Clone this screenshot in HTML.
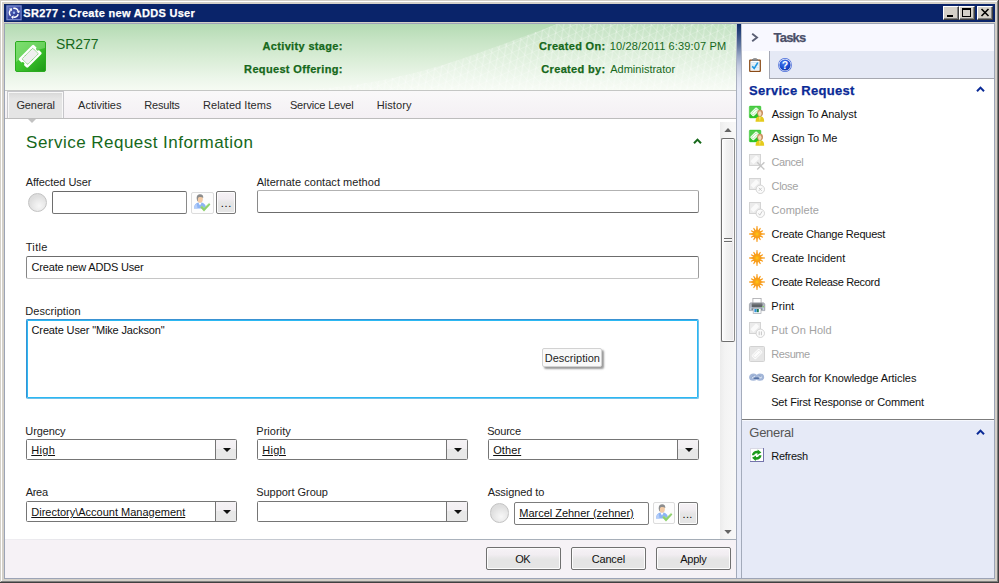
<!DOCTYPE html>
<html lang="en"><head><meta charset="utf-8"><title>SR277 : Create new ADDS User</title>
<style>
html,body{margin:0;padding:0}
body{width:999px;height:583px;overflow:hidden;position:relative;background:#d4d0c8;font-family:"Liberation Sans",sans-serif;font-size:11px;color:#000}
.a{position:absolute;box-sizing:border-box}
.t{position:absolute;white-space:nowrap;line-height:0;height:0}
svg{position:absolute;overflow:visible}
.cap{position:absolute;box-sizing:border-box;width:16px;height:14px;top:6px;background:#d4d0c8;border:1px solid;border-color:#fff #404040 #404040 #fff;box-shadow:inset -1px -1px 0 #808080}
.tb{position:absolute;box-sizing:border-box;background:#fff;border:1px solid #8e8e8e;border-top-color:#6e6e6e;border-left-color:#7a7a7a;border-radius:2px}
.cb{position:absolute;box-sizing:border-box;background:#fff;border:1px solid #757575;border-radius:1.5px;height:21px;width:211px}
.cb i{position:absolute;right:0;top:0;width:20px;height:19px;border-left:1px solid #757575;background:linear-gradient(#f6f3f6 0,#f2eff2 45%,#e8e8e8 50%,#e8e8e8 100%)}
.cb i:after{content:"";position:absolute;left:7px;top:8px;border:4px solid transparent;border-top:4px solid #111;border-bottom:0;width:0;height:0;margin-left:-0.5px}
.btn{position:absolute;box-sizing:border-box;border:1px solid #707070;border-radius:2px;box-shadow:inset 0 0 0 1px #fcfcfc;background:linear-gradient(#f6f2f6 0,#f1edf1 32%,#eae8ea 44%,#e5e5e5 54%,#e5e5e5 100%)}
.circ{position:absolute;box-sizing:border-box;width:19.7px;height:19.7px;border-radius:50%;border:1px solid #c3c3c3;background:radial-gradient(circle at 60% 70%,#f7f7f7 0,#ececec 30%,#dfdfdf 62%,#d9d9d9 100%)}
.ib{position:absolute;box-sizing:border-box;width:23px;height:22px;border:1px solid #dcdcdc;border-radius:2px;background:#fdfdfd}

</style></head>
<body>
<!-- window frame -->
<div class="a" style="left:1px;top:1px;width:996px;height:1px;background:#fff"></div>
<div class="a" style="left:1px;top:1px;width:1px;height:580px;background:#fff"></div>
<div class="a" style="left:998px;top:0;width:1px;height:583px;background:#404040"></div>
<div class="a" style="left:0;top:582px;width:999px;height:1px;background:#404040"></div>
<div class="a" style="left:997px;top:1px;width:1px;height:581px;background:#808080"></div>
<div class="a" style="left:1px;top:581px;width:997px;height:1px;background:#808080"></div>
<!-- title bar -->
<div class="a" style="left:4px;top:4px;width:991px;height:18px;background:#0a246a"></div>
<svg style="left:6px;top:5px" width="16" height="16" viewBox="0 0 16 16"><defs><linearGradient id="ti" x1="0" y1="0" x2="1" y2="1"><stop offset="0" stop-color="#6272c0"/><stop offset="0.5" stop-color="#3a48a0"/><stop offset="1" stop-color="#27328a"/></linearGradient></defs><rect x="0.3" y="0.3" width="15.4" height="15" fill="#7b8cd2"/><rect x="1.5" y="1.5" width="13" height="12.6" fill="url(#ti)"/><path d="M7.22 3.37A4.5 4.5 0 0 1 12.17 6.11" stroke="#fff" stroke-width="1.4" fill="none"/><path d="M13.07 8.34L13.93 5.40L10.41 6.83Z" fill="#fff"/><path d="M12.23 9.34A4.5 4.5 0 0 1 7.37 12.26" stroke="#fff" stroke-width="1.4" fill="none"/><path d="M5.00 11.92L7.11 14.14L7.64 10.37Z" fill="#fff"/><path d="M4.55 10.69A4.5 4.5 0 0 1 4.45 5.03" stroke="#fff" stroke-width="1.4" fill="none"/><path d="M5.93 3.14L2.96 3.86L5.95 6.20Z" fill="#fff"/><circle cx="8.0" cy="7.8" r="1.2" fill="#9db8f0"/></svg>
<div class="cap" style="left:943px"><div class="a" style="left:3px;top:8px;width:6px;height:2px;background:#000"></div></div>
<div class="cap" style="left:959px"><div class="a" style="left:2px;top:1px;width:9px;height:9px;border:1px solid #000;border-top-width:2px"></div></div>
<div class="cap" style="left:977px"><svg style="left:3px;top:2px" width="8" height="7" viewBox="0 0 8 7"><path d="M0.5 0 L7.5 7 M7.5 0 L0.5 7" stroke="#000" stroke-width="1.6" fill="none"/></svg></div>
<!-- content outline -->
<div class="a" style="left:4px;top:23px;width:991px;height:556px;border:1px solid #9ca4b6;background:#fff"></div>

<!-- LEFT PANE -->
<div class="a" id="hdr" style="left:5px;top:24px;width:731px;height:66px;background:linear-gradient(#b4dbb3 0,#c7e4c5 25%,#dbeed8 55%,#ecf6ea 82%,#f6fbf3 100%)"></div>
<svg style="left:5px;top:24px" width="731" height="66" viewBox="0 0 731 66">
<defs>
<pattern id="mesh" width="8" height="8" patternUnits="userSpaceOnUse" patternTransform="rotate(-24) skewX(18)">
<path d="M0 0H8M0 0V8M0 8L8 0" stroke="#fff" stroke-width="0.8" fill="none" opacity="0.5"/>
</pattern>
<linearGradient id="mf" gradientUnits="userSpaceOnUse" x1="290" y1="0" x2="731" y2="0"><stop offset="0" stop-color="#fff" stop-opacity="0.04"/><stop offset="0.35" stop-color="#fff" stop-opacity="0.2"/><stop offset="1" stop-color="#fff" stop-opacity="0.2"/></linearGradient>
<clipPath id="hc"><rect x="0" y="0" width="731" height="66"/></clipPath>
</defs>
<g clip-path="url(#hc)">
<path d="M290 66 C360 64 420 48 465 32 S532 8 552 0 L731 0 L731 66 Z" fill="url(#mf)"/>
<path d="M290 66 C360 64 420 48 465 32 S532 8 552 0 L731 0 L731 66 Z" fill="url(#mesh)"/>
</g>
</svg>
<div class="a" style="left:5px;top:90px;width:731px;height:1px;background:#c4c6c4"></div>
<div class="a" style="left:5px;top:91px;width:731px;height:27px;background:linear-gradient(#f9f8f9,#f4f0f4)"></div>
<div class="a" style="left:5px;top:118px;width:731px;height:1px;background:#bdbdbd"></div>
<!-- selected tab -->
<div class="a" style="left:7px;top:91px;width:57px;height:27px;background:linear-gradient(#d5d5d5 0,#dedede 3px,#e5e5e5 7px,#e5e5e5 100%);border:1px solid #c6c6ca;border-bottom:none;box-shadow:inset 1px 1px 0 #f8f8f8,inset -1px 0 0 #f8f8f8"></div>
<svg style="left:28px;top:119px" width="8" height="4" viewBox="0 0 8 4"><path d="M0 0H8L4 4Z" fill="#c2c2c2"/></svg>
<!-- green logo -->
<svg style="left:15px;top:41px" width="31" height="31" viewBox="0 0 31 31">
<defs><linearGradient id="lg" x1="0" y1="0" x2="1" y2="1"><stop offset="0" stop-color="#56d644"/><stop offset="0.5" stop-color="#3cc42c"/><stop offset="1" stop-color="#1c9816"/></linearGradient></defs>
<rect x="0.5" y="0.5" width="30" height="30" rx="1.5" fill="url(#lg)" stroke="#2bab20"/>
<path d="M1 1H30V7C20 9 9 14 1 21Z" fill="#fff" opacity="0.24"/>
<g transform="rotate(-45 15.2 15.3)">
<path d="M6 8.9H24.4A1.4 1.4 0 0 1 25.8 10.3V13.6A1.7 1.7 0 0 0 25.8 17V20.300000000000001A1.4 1.4 0 0 1 24.4 21.7H6A1.4 1.4 0 0 1 4.6 20.3V17A1.7 1.7 0 0 0 4.6 13.6V10.3A1.4 1.4 0 0 1 6 8.9Z" fill="#fff"/>
<rect x="7.6" y="11.3" width="15.2" height="8" rx="0.8" fill="#f0f0f0" stroke="#5cc24e" stroke-width="0.8" stroke-dasharray="1.2 0.5"/>
</g>
</svg>
<!-- collapse chevron -->
<svg style="left:692.8px;top:138.3px" width="9" height="6" viewBox="0 0 9 6"><path d="M1 5.2L4.5 1.6L8 5.2" stroke="#16681a" stroke-width="2" fill="none"/></svg>

<!-- form controls -->
<div class="circ" style="left:27.7px;top:192.7px"></div>
<div class="tb" style="left:52px;top:191px;width:135px;height:23px;border-color:#6a6a6a #8a8a8a #747474 #6e6e6e"></div>
<div class="ib" id="ib1" style="left:191px;top:192px"></div>
<div class="btn" style="left:216px;top:191px;width:20px;height:23px;border-color:#787878"></div>
<div class="tb" style="left:257px;top:190px;width:442px;height:23px;border-color:#b2b2b2 #999 #6c6c6c #8a8a8a"></div>
<div class="tb" style="left:26px;top:256px;width:673px;height:23px;border-color:#6c6c6c #9c9c9c #c6c6c6 #868686"></div>
<div class="a" style="left:26px;top:319px;width:673px;height:80px;border:1px solid;border-color:#3a92d2 #6fc0ea #6fc0ea #3a92d2;border-radius:2px;background:#fff;box-shadow:inset 0 0 0 1px #2bb8f3"></div>
<!-- tooltip -->
<div class="a" style="left:542px;top:348px;width:60px;height:19px;background:#f9f9f9;border:1px solid #d2d2d2;border-radius:2px;box-shadow:2px 2px 2px rgba(0,0,0,0.4)"></div>
<div class="cb" style="left:26px;top:439px"><i></i></div>
<div class="cb" style="left:257px;top:439px"><i></i></div>
<div class="cb" style="left:488px;top:439px"><i></i></div>
<div class="cb" style="left:26px;top:501px"><i></i></div>
<div class="cb" style="left:257px;top:501px"><i></i></div>
<div class="circ" style="left:489.6px;top:503.4px"></div>
<div class="tb" style="left:514px;top:502px;width:135px;height:23px;border-color:#7c7c7c"></div>
<div class="ib" id="ib2" style="left:653px;top:502px;width:22px"></div>
<div class="btn" style="left:678px;top:502px;width:20px;height:23px;border-color:#787878"></div>

<!-- scrollbar -->
<div class="a" style="left:720px;top:122px;width:16px;height:417px;background:linear-gradient(90deg,#ececec,#f3f3f3 30%,#f8f8f8)"></div>
<svg style="left:724px;top:128px" width="8" height="4" viewBox="0 0 8 4"><path d="M0.3 4H7.7L4 0Z" fill="#646464"/></svg>
<svg style="left:724px;top:530px" width="8" height="4" viewBox="0 0 8 4"><path d="M0.3 0H7.7L4 4Z" fill="#646464"/></svg>
<div class="a" style="left:721px;top:138px;width:14px;height:204px;border:1px solid #6e6e6e;border-right-color:#8c8c8c;border-radius:2px;background:linear-gradient(90deg,#fdfdfd,#f1f1f1 40%,#efefef 60%,#e9e5e9);box-shadow:inset 0 0 0 1px rgba(255,255,255,.7)"></div>
<div class="a" style="left:724px;top:238px;width:8px;height:1px;background:#6c6c6c;box-shadow:0 3px 0 #6c6c6c,0 1px 0 #fafafa,0 4px 0 #fafafa"></div>

<!-- bottom bar -->
<div class="a" style="left:5px;top:539px;width:731px;height:39px;background:#f6f2f6"></div>
<div class="a" style="left:5px;top:539px;width:731px;height:1px;background:linear-gradient(90deg,#f0eef2,#aab2bc 60%,#a4acb6)"></div>
<div class="btn" style="left:486px;top:547px;width:75px;height:23px"></div>
<div class="btn" style="left:571px;top:547px;width:75px;height:23px"></div>
<div class="btn" style="left:656px;top:547px;width:75px;height:23px"></div>

<!-- SPLITTER -->
<div class="a" style="left:736px;top:24px;width:6px;height:554px;background:linear-gradient(#c9cdd6 0,#a9b0c0 40px,#a2aaba 100%)"></div>
<div class="a" style="left:737px;top:24px;width:4px;height:554px;background:linear-gradient(#0b2a66 0,#2f4a80 10px,#62779f 22px,#9aa8c6 32px,#c2cadf 42px,#dce1ef 54px,#e6eaf7 66px,#e6eaf7 100%)"></div>

<!-- RIGHT PANE -->
<div class="a" style="left:742px;top:24px;width:252px;height:27px;background:#f8f8ff"></div>
<div class="a" style="left:742px;top:51px;width:252px;height:28px;background:#fff"></div>
<div class="a" style="left:769px;top:51px;width:225px;height:28px;background:#e5e9f5;border-left:1px solid #a4a8b4;border-bottom:1px solid #a6a8b0"></div>
<div class="a" style="left:742px;top:79px;width:252px;height:340px;background:#fff"></div>
<div class="a" style="left:742px;top:419px;width:252px;height:1px;background:#7c7c7c"></div>
<div class="a" style="left:742px;top:420px;width:252px;height:158px;background:#e6eaf7;border-top:1px solid #f6f8fd"></div>
<svg style="left:751px;top:33px" width="8" height="9" viewBox="0 0 8 9"><path d="M1.2 0.8L6 4.5L1.2 8.2" stroke="#5a5f74" stroke-width="1.9" fill="none"/></svg>
<svg style="left:976.3px;top:86.2px" width="9" height="6" viewBox="0 0 9 6"><path d="M1 5.2L4.5 1.6L8 5.2" stroke="#0a2a96" stroke-width="2" fill="none"/></svg>
<svg style="left:976.3px;top:428.6px" width="9" height="6" viewBox="0 0 9 6"><path d="M1 5.2L4.5 1.6L8 5.2" stroke="#0a2a96" stroke-width="2" fill="none"/></svg>
<svg style="left:749px;top:106px" width="16" height="16" viewBox="0 0 16 16"><rect x="0.3" y="0.1" width="11.6" height="11.8" rx="0.9" fill="#2cc226" stroke="#3acc34" stroke-width="0.5"/><path d="M0.5 0.4H11.5V3.2C8 4.2 4 6 0.5 8.6Z" fill="#fff" opacity="0.18"/><g transform="rotate(-45 5.7 5.9)"><rect x="1.2999999999999998" y="3.5000000000000004" width="8.8" height="4.8" rx="1" fill="#f4fff2"/><rect x="2.5" y="4.7" width="6.4" height="2.4" fill="none" stroke="#9ada90" stroke-width="0.6"/></g><path d="M6.6 15.7 C6.4 12 8 10.3 10.9 10.3 C13.8 10.3 15.3 12 15.1 15.7 Z" fill="#e5cb1c"/><path d="M10.2 10.6 L10.9 15.4 L11.6 10.6Z" fill="#f4ec9c"/><ellipse cx="11.1" cy="7.1" rx="2.9" ry="3.4" fill="#c88e5e"/><ellipse cx="10.8" cy="7.5" rx="1.7" ry="2.5" fill="#f6dcb8"/><path d="M8.6 5.6C9.4 3.6 12.6 3.4 13.6 5.4C12.4 4.9 10.2 4.9 8.6 5.6Z" fill="#d29a6a"/></svg>
<svg style="left:749px;top:130px" width="16" height="16" viewBox="0 0 16 16"><rect x="0.3" y="0.1" width="11.6" height="11.8" rx="0.9" fill="#2cc226" stroke="#3acc34" stroke-width="0.5"/><path d="M0.5 0.4H11.5V3.2C8 4.2 4 6 0.5 8.6Z" fill="#fff" opacity="0.18"/><g transform="rotate(-45 5.7 5.9)"><rect x="1.2999999999999998" y="3.5000000000000004" width="8.8" height="4.8" rx="1" fill="#f4fff2"/><rect x="2.5" y="4.7" width="6.4" height="2.4" fill="none" stroke="#9ada90" stroke-width="0.6"/></g><path d="M6.6 15.7 C6.4 12 8 10.3 10.9 10.3 C13.8 10.3 15.3 12 15.1 15.7 Z" fill="#e5cb1c"/><path d="M10.2 10.6 L10.9 15.4 L11.6 10.6Z" fill="#f4ec9c"/><ellipse cx="11.1" cy="7.1" rx="2.9" ry="3.4" fill="#c88e5e"/><ellipse cx="10.8" cy="7.5" rx="1.7" ry="2.5" fill="#f6dcb8"/><path d="M8.6 5.6C9.4 3.6 12.6 3.4 13.6 5.4C12.4 4.9 10.2 4.9 8.6 5.6Z" fill="#d29a6a"/></svg>
<svg style="left:749px;top:154px" width="16" height="16" viewBox="0 0 16 16"><rect x="0.5" y="0.5" width="11" height="11" fill="#ebebeb" stroke="#d4d4d4"/><g transform="rotate(-45 5.8 5.8)"><rect x="1.7000000000000002" y="3.5999999999999996" width="8.2" height="4.4" rx="1" fill="#fafafa"/></g><path d="M8.2 8.2L15.4 15.6M15.4 8.2L8.2 15.6" stroke="#c6c6c6" stroke-width="1.4" fill="none"/></svg>
<svg style="left:749px;top:178px" width="16" height="16" viewBox="0 0 16 16"><rect x="0.5" y="0.5" width="11" height="11" fill="#ebebeb" stroke="#d4d4d4"/><g transform="rotate(-45 5.8 5.8)"><rect x="1.7000000000000002" y="3.5999999999999996" width="8.2" height="4.4" rx="1" fill="#fafafa"/></g><circle cx="11.3" cy="11.3" r="4.2" fill="#fbfbfb" stroke="#cfcfcf" stroke-width="0.9"/><path d="M9.8 9.8L12.8 12.8M12.8 9.8L9.8 12.8" stroke="#c4c4c4" stroke-width="0.9"/></svg>
<svg style="left:749px;top:202px" width="16" height="16" viewBox="0 0 16 16"><rect x="0.5" y="0.5" width="11" height="11" fill="#ebebeb" stroke="#d4d4d4"/><g transform="rotate(-45 5.8 5.8)"><rect x="1.7000000000000002" y="3.5999999999999996" width="8.2" height="4.4" rx="1" fill="#fafafa"/></g><circle cx="11.3" cy="11.3" r="4.2" fill="#fbfbfb" stroke="#cfcfcf" stroke-width="0.9"/><path d="M9.4 11.4L10.8 13.2L13.2 9.2" stroke="#c4c4c4" stroke-width="0.9" fill="none"/></svg>
<svg style="left:749px;top:226px" width="16" height="16" viewBox="0 0 16 16"><defs><radialGradient id="sg"><stop offset="0" stop-color="#ffcc14"/><stop offset="0.5" stop-color="#fbab14"/><stop offset="1" stop-color="#f79a18"/></radialGradient></defs><path d="M10.00 9.15L16.00 8.45L16.00 7.55L10.00 6.85ZM9.16 10.00L13.75 11.84L14.20 11.06L10.31 8.00ZM8.00 10.31L11.06 14.20L11.84 13.75L10.00 9.16ZM6.85 10.00L7.55 16.00L8.45 16.00L9.15 10.00ZM6.00 9.16L4.16 13.75L4.94 14.20L8.00 10.31ZM5.69 8.00L1.80 11.06L2.25 11.84L6.84 10.00ZM6.00 6.85L-0.00 7.55L0.00 8.45L6.00 9.15ZM6.84 6.00L2.25 4.16L1.80 4.94L5.69 8.00ZM8.00 5.69L4.94 1.80L4.16 2.25L6.00 6.84ZM9.15 6.00L8.45 -0.00L7.55 0.00L6.85 6.00ZM10.00 6.84L11.84 2.25L11.06 1.80L8.00 5.69ZM10.31 8.00L14.20 4.94L13.75 4.16L9.16 6.00Z" fill="#f89c1a"/><circle cx="8" cy="8" r="3.6" fill="url(#sg)"/></svg>
<svg style="left:749px;top:250px" width="16" height="16" viewBox="0 0 16 16"><defs><radialGradient id="sg"><stop offset="0" stop-color="#ffcc14"/><stop offset="0.5" stop-color="#fbab14"/><stop offset="1" stop-color="#f79a18"/></radialGradient></defs><path d="M10.00 9.15L16.00 8.45L16.00 7.55L10.00 6.85ZM9.16 10.00L13.75 11.84L14.20 11.06L10.31 8.00ZM8.00 10.31L11.06 14.20L11.84 13.75L10.00 9.16ZM6.85 10.00L7.55 16.00L8.45 16.00L9.15 10.00ZM6.00 9.16L4.16 13.75L4.94 14.20L8.00 10.31ZM5.69 8.00L1.80 11.06L2.25 11.84L6.84 10.00ZM6.00 6.85L-0.00 7.55L0.00 8.45L6.00 9.15ZM6.84 6.00L2.25 4.16L1.80 4.94L5.69 8.00ZM8.00 5.69L4.94 1.80L4.16 2.25L6.00 6.84ZM9.15 6.00L8.45 -0.00L7.55 0.00L6.85 6.00ZM10.00 6.84L11.84 2.25L11.06 1.80L8.00 5.69ZM10.31 8.00L14.20 4.94L13.75 4.16L9.16 6.00Z" fill="#f89c1a"/><circle cx="8" cy="8" r="3.6" fill="url(#sg)"/></svg>
<svg style="left:749px;top:274px" width="16" height="16" viewBox="0 0 16 16"><defs><radialGradient id="sg"><stop offset="0" stop-color="#ffcc14"/><stop offset="0.5" stop-color="#fbab14"/><stop offset="1" stop-color="#f79a18"/></radialGradient></defs><path d="M10.00 9.15L16.00 8.45L16.00 7.55L10.00 6.85ZM9.16 10.00L13.75 11.84L14.20 11.06L10.31 8.00ZM8.00 10.31L11.06 14.20L11.84 13.75L10.00 9.16ZM6.85 10.00L7.55 16.00L8.45 16.00L9.15 10.00ZM6.00 9.16L4.16 13.75L4.94 14.20L8.00 10.31ZM5.69 8.00L1.80 11.06L2.25 11.84L6.84 10.00ZM6.00 6.85L-0.00 7.55L0.00 8.45L6.00 9.15ZM6.84 6.00L2.25 4.16L1.80 4.94L5.69 8.00ZM8.00 5.69L4.94 1.80L4.16 2.25L6.00 6.84ZM9.15 6.00L8.45 -0.00L7.55 0.00L6.85 6.00ZM10.00 6.84L11.84 2.25L11.06 1.80L8.00 5.69ZM10.31 8.00L14.20 4.94L13.75 4.16L9.16 6.00Z" fill="#f89c1a"/><circle cx="8" cy="8" r="3.6" fill="url(#sg)"/></svg>
<svg style="left:749px;top:298px" width="16" height="16" viewBox="0 0 16 16"><rect x="3.9" y="0.4" width="8.2" height="5" fill="#fff" stroke="#a8a8ac" stroke-width="0.8"/><path d="M0.4 6.6 C0.4 5.4 1.2 4.8 2.4 4.8 H13.8 C15 4.8 15.8 5.4 15.8 6.6 V12.6 H0.4Z" fill="#b2b7c0" stroke="#8d9198" stroke-width="0.6"/><rect x="2.8" y="5.4" width="10.6" height="4" rx="0.6" fill="#5f6367"/><rect x="2.8" y="5.4" width="10.6" height="1.2" rx="0.6" fill="#808488"/><rect x="1.2" y="9.6" width="13.8" height="2.6" fill="#c9d6e6"/><rect x="2.6" y="10.4" width="1.2" height="1.4" fill="#50545c"/><rect x="12.2" y="10.4" width="1.2" height="1.4" fill="#50545c"/><rect x="4.2" y="10.4" width="7.8" height="5.2" fill="#fdfdff" stroke="#a4a8b0" stroke-width="0.7"/><rect x="5.4" y="11" width="2.2" height="3.2" fill="#2a8fd8"/><rect x="7.8" y="11" width="2" height="3.2" fill="#1f7a52"/><rect x="13.6" y="8" width="1.3" height="1.3" fill="#7ddc5c"/></svg>
<svg style="left:749px;top:322px" width="16" height="16" viewBox="0 0 16 16"><rect x="0.5" y="0.5" width="11" height="11" fill="#ebebeb" stroke="#d4d4d4"/><g transform="rotate(-45 5.8 5.8)"><rect x="1.7000000000000002" y="3.5999999999999996" width="8.2" height="4.4" rx="1" fill="#fafafa"/></g><circle cx="11.3" cy="11.3" r="4.2" fill="#fbfbfb" stroke="#cfcfcf" stroke-width="0.9"/><path d="M10.2 9.4V13.2M12.4 9.4V13.2" stroke="#c8c8c8" stroke-width="1"/></svg>
<svg style="left:749px;top:346px" width="16" height="16" viewBox="0 0 16 16"><rect x="0.5" y="0.5" width="15" height="15" rx="1" fill="#e6e6e6" stroke="#d2d2d2"/><g transform="rotate(-45 8 8)"><rect x="2.75" y="5.2" width="10.5" height="5.6" rx="1" fill="#fcfcfc"/><rect x="3.95" y="6.4" width="8.1" height="3.1999999999999997" fill="none" stroke="#dddddd" stroke-width="0.6"/></g></svg>
<svg style="left:749px;top:370px" width="16" height="16" viewBox="0 0 16 16"><ellipse cx="4.3" cy="7.2" rx="3.1" ry="2.5" fill="#d6e0f0" stroke="#a3b6d8" stroke-width="2.2"/><ellipse cx="11" cy="7.2" rx="3.1" ry="2.5" fill="#d6e0f0" stroke="#a3b6d8" stroke-width="2.2"/><path d="M2.6 7.6C2.6 6.4 3.4 5.9 4.8 5.9M9.6 6.2C10.6 5.8 11.8 6 12.2 6.8" stroke="#6f8cbc" stroke-width="0.9" fill="none"/><path d="M5 8.1H9.8" stroke="#3d5c94" stroke-width="1.3" stroke-linecap="round"/></svg>
<svg style="left:750px;top:448px" width="14" height="14" viewBox="0 0 14 14"><rect x="0" y="0" width="14" height="14" fill="#7474ac"/><rect x="0" y="0" width="13" height="13" fill="#d8d8e4"/><rect x="1" y="1" width="12" height="12" fill="#fff"/><path d="M1.9 7.2 C2.1 4.2 4.6 2.4 7.6 2.7 L7.7 1.5 L11.4 4.6 L7.3 7 L7.5 5.3 C5.8 5.1 4.7 5.8 4.3 7.2 Z" fill="#1a9a1a"/><path d="M1.9 7.2 C2.1 4.2 4.6 2.4 7.6 2.7 L7.7 1.5 L11.4 4.6 L7.3 7 L7.5 5.3 C5.8 5.1 4.7 5.8 4.3 7.2 Z" fill="#1a9a1a" transform="rotate(180 6.7 7.2)"/></svg>
<svg style="left:749px;top:58px" width="12" height="14" viewBox="0 0 12 14"><rect x="0.1" y="1.5" width="11.8" height="12.5" rx="1" fill="#8a4a16"/><rect x="1.4" y="2.8" width="9.2" height="10" fill="#fff"/><path d="M1.4 4.6H10.6M1.4 6.2H10.6M1.4 7.8H10.6M1.4 9.4H10.6M1.4 11H10.6" stroke="#b9d8ee" stroke-width="0.7"/><rect x="3" y="1.1" width="6" height="2" rx="0.5" fill="#7c7c7c"/><rect x="4.2" y="0.1" width="3.6" height="1.5" rx="0.5" fill="#9c9c9c"/><path d="M3.2 8.2L5.2 10.4L8.8 4.6" stroke="#1b96e2" stroke-width="1.6" fill="none"/></svg>
<svg style="left:778px;top:58px" width="14" height="14" viewBox="0 0 14 14"><defs><radialGradient id="hg" cx="0.4" cy="0.3" r="0.8"><stop offset="0" stop-color="#4a7cf0"/><stop offset="0.6" stop-color="#1c4cd0"/><stop offset="1" stop-color="#0c2ca0"/></radialGradient></defs><circle cx="7" cy="7" r="6.9" fill="#4468d8"/><circle cx="7" cy="7" r="6.2" fill="#f2f5ff"/><circle cx="7" cy="7" r="5.6" fill="url(#hg)"/><text x="7" y="10.7" text-anchor="middle" font-family="Liberation Sans, sans-serif" font-weight="bold" font-size="10.5" fill="#fff">?</text></svg>
<svg style="left:191px;top:192px" width="23" height="22" viewBox="0 0 23 22"><path d="M3 16.5 C3 12.4 5.4 10.6 9 10.6 C12.6 10.6 15 12.4 15 16.5 Z" fill="#8db4f4"/><path d="M3 16.5 C3 14.4 4 12.4 5.6 11.4 L6.6 16.5Z" fill="#b4cdf8"/><path d="M7.4 10.8 L9 13.6 L10.6 10.8Z" fill="#fff"/><ellipse cx="9" cy="7" rx="2.9" ry="3.7" fill="#f3cba6"/><path d="M5.8 7.2 C5.2 3.4 7.2 2.2 9.2 2.2 C11.4 2.2 12.6 3.8 12.2 6 C11 4.8 8.8 4.6 7.4 5.4 C6.8 6.2 6.8 7.8 7 9.2 C6.2 8.8 5.9 8 5.8 7.2Z" fill="#8c8c8c"/><path d="M9.4 15.4 L11 13.8 L13 16.2 L18.2 11.2 L19.4 12.6 L13 19.6Z" fill="#8ed06c"/><path d="M9.4 15.4 L11 13.8 L13 16.2 L18.2 11.2" stroke="#a6e088" stroke-width="0.6" fill="none"/></svg>
<svg style="left:653px;top:502px" width="23" height="22" viewBox="0 0 23 22"><path d="M3 16.5 C3 12.4 5.4 10.6 9 10.6 C12.6 10.6 15 12.4 15 16.5 Z" fill="#8db4f4"/><path d="M3 16.5 C3 14.4 4 12.4 5.6 11.4 L6.6 16.5Z" fill="#b4cdf8"/><path d="M7.4 10.8 L9 13.6 L10.6 10.8Z" fill="#fff"/><ellipse cx="9" cy="7" rx="2.9" ry="3.7" fill="#f3cba6"/><path d="M5.8 7.2 C5.2 3.4 7.2 2.2 9.2 2.2 C11.4 2.2 12.6 3.8 12.2 6 C11 4.8 8.8 4.6 7.4 5.4 C6.8 6.2 6.8 7.8 7 9.2 C6.2 8.8 5.9 8 5.8 7.2Z" fill="#8c8c8c"/><path d="M9.4 15.4 L11 13.8 L13 16.2 L18.2 11.2 L19.4 12.6 L13 19.6Z" fill="#8ed06c"/><path d="M9.4 15.4 L11 13.8 L13 16.2 L18.2 11.2" stroke="#a6e088" stroke-width="0.6" fill="none"/></svg>

<div class="t" id="t0" style="left:23.32px;top:13px;font-size:11px;color:#fff;font-weight:bold;-webkit-text-stroke:0.25px #fff;letter-spacing:0.298px;">SR277 : Create new ADDS User</div>
<div class="t" id="t1" style="left:56.38px;top:43.5px;font-size:15.5px;color:#16681a;letter-spacing:-0.065px;transform:scaleX(0.9);transform-origin:0 0">SR277</div>
<div class="t" id="t2" style="left:262.52px;top:46px;font-size:11px;color:#16681a;font-weight:bold;-webkit-text-stroke:0.25px #16681a;letter-spacing:0.341px;">Activity stage:</div>
<div class="t" id="t3" style="left:244.12px;top:69px;font-size:11px;color:#16681a;font-weight:bold;-webkit-text-stroke:0.25px #16681a;letter-spacing:0.338px;">Request Offering:</div>
<div class="t" id="t4" style="left:539.02px;top:46px;font-size:11px;color:#16681a;font-weight:bold;-webkit-text-stroke:0.25px #16681a;letter-spacing:0.324px;">Created On:</div>
<div class="t" id="t5" style="left:541.34px;top:69px;font-size:11px;color:#16681a;font-weight:bold;-webkit-text-stroke:0.25px #16681a;letter-spacing:0.332px;">Created by:</div>
<div class="t" id="t6" style="left:609.85px;top:46px;font-size:11px;color:#16681a;letter-spacing:0.135px;">10/28/2011 6:39:07 PM</div>
<div class="t" id="t7" style="left:610.25px;top:69px;font-size:11px;color:#16681a;letter-spacing:0.001px;">Administrator</div>
<div class="t" id="t8" style="left:16.41px;top:105px;font-size:11px;color:#2a2a2a;letter-spacing:-0.104px;">General</div>
<div class="t" id="t9" style="left:78.05px;top:105px;font-size:11px;color:#2a2a2a;letter-spacing:0.002px;">Activities</div>
<div class="t" id="t10" style="left:144.28px;top:105px;font-size:11px;color:#2a2a2a;letter-spacing:-0.184px;">Results</div>
<div class="t" id="t11" style="left:202.99px;top:105px;font-size:11px;color:#2a2a2a;letter-spacing:0.045px;">Related Items</div>
<div class="t" id="t12" style="left:289.93px;top:105px;font-size:11px;color:#2a2a2a;letter-spacing:-0.186px;">Service Level</div>
<div class="t" id="t13" style="left:376.75px;top:105px;font-size:11px;color:#2a2a2a;letter-spacing:0.075px;">History</div>
<div class="t" id="t14" style="left:26.08px;top:142.5px;font-size:17px;color:#16681a;letter-spacing:0.474px;">Service Request Information</div>
<div class="t" id="t15" style="left:25.71px;top:182px;font-size:11px;color:#222;letter-spacing:-0.053px;">Affected User</div>
<div class="t" id="t16" style="left:256.71px;top:182px;font-size:11px;color:#222;letter-spacing:0.044px;">Alternate contact method</div>
<div class="t" id="t17" style="left:25.73px;top:247px;font-size:11px;color:#222;letter-spacing:0.329px;">Title</div>
<div class="t" id="t18" style="left:31.57px;top:267px;font-size:11px;color:#111;letter-spacing:-0.184px;">Create new ADDS User</div>
<div class="t" id="t19" style="left:25.26px;top:311px;font-size:11px;color:#222;letter-spacing:0.045px;">Description</div>
<div class="t" id="t20" style="left:31.57px;top:330px;font-size:11px;color:#111;letter-spacing:-0.147px;">Create User &quot;Mike Jackson&quot;</div>
<div class="t" id="t21" style="left:544.75px;top:358px;font-size:11px;color:#1e1e1e;letter-spacing:0.014px;">Description</div>
<div class="t" id="t22" style="left:25.32px;top:431px;font-size:11px;color:#222;letter-spacing:-0.112px;">Urgency</div>
<div class="t" id="t23" style="left:256.28px;top:431px;font-size:11px;color:#222;letter-spacing:0.054px;">Priority</div>
<div class="t" id="t24" style="left:487.18px;top:431px;font-size:11px;color:#222;letter-spacing:-0.200px;">Source</div>
<div class="t" id="t25" style="left:31.28px;top:450px;font-size:11px;color:#111;letter-spacing:0.287px;text-decoration:underline">High</div>
<div class="t" id="t26" style="left:262.28px;top:450px;font-size:11px;color:#111;letter-spacing:0.257px;text-decoration:underline">High</div>
<div class="t" id="t27" style="left:493.15px;top:450px;font-size:11px;color:#111;letter-spacing:0.104px;text-decoration:underline">Other</div>
<div class="t" id="t28" style="left:25.71px;top:492px;font-size:11px;color:#222;letter-spacing:-0.302px;">Area</div>
<div class="t" id="t29" style="left:256.18px;top:492px;font-size:11px;color:#222;letter-spacing:-0.028px;">Support Group</div>
<div class="t" id="t30" style="left:487.71px;top:492px;font-size:11px;color:#222;letter-spacing:-0.086px;">Assigned to</div>
<div class="t" id="t31" style="left:31.27px;top:512px;font-size:11px;color:#111;letter-spacing:-0.004px;text-decoration:underline">Directory\Account Management</div>
<div class="t" id="t32" style="left:519.28px;top:513px;font-size:11px;color:#111;letter-spacing:-0.020px;text-decoration:underline">Marcel Zehner (zehner)</div>
<div class="t" id="t33" style="left:220.78px;top:203px;font-size:11px;color:#000;letter-spacing:0.642px;">...</div>
<div class="t" id="t34" style="left:682.57px;top:514px;font-size:11px;color:#000;letter-spacing:0.320px;">...</div>
<div class="t" id="t35" style="left:515.15px;top:559px;font-size:11px;color:#111;letter-spacing:-0.415px;">OK</div>
<div class="t" id="t36" style="left:591.64px;top:559px;font-size:11px;color:#111;letter-spacing:-0.145px;">Cancel</div>
<div class="t" id="t37" style="left:680.23px;top:559px;font-size:11px;color:#111;letter-spacing:-0.238px;">Apply</div>
<div class="t" id="t38" style="left:773.61px;top:37.5px;font-size:13px;color:#4a4f68;font-weight:bold;-webkit-text-stroke:0.25px #4a4f68;letter-spacing:-0.826px;">Tasks</div>
<div class="t" id="t39" style="left:749.06px;top:90.5px;font-size:13px;color:#0a2a96;font-weight:bold;-webkit-text-stroke:0.25px #0a2a96;letter-spacing:0.302px;">Service Request</div>
<div class="t" id="t40" style="left:771.71px;top:114px;font-size:11px;color:#111;letter-spacing:-0.064px;">Assign To Analyst</div>
<div class="t" id="t41" style="left:771.71px;top:138px;font-size:11px;color:#111;letter-spacing:-0.009px;">Assign To Me</div>
<div class="t" id="t42" style="left:771.57px;top:162px;font-size:11px;color:#a3a3a3;letter-spacing:-0.427px;">Cancel</div>
<div class="t" id="t43" style="left:771.57px;top:186px;font-size:11px;color:#a3a3a3;letter-spacing:-0.344px;">Close</div>
<div class="t" id="t44" style="left:771.57px;top:210px;font-size:11px;color:#a3a3a3;letter-spacing:0.029px;">Complete</div>
<div class="t" id="t45" style="left:771.57px;top:234px;font-size:11px;color:#111;letter-spacing:-0.240px;">Create Change Request</div>
<div class="t" id="t46" style="left:771.57px;top:258px;font-size:11px;color:#111;letter-spacing:-0.068px;">Create Incident</div>
<div class="t" id="t47" style="left:771.57px;top:282px;font-size:11px;color:#111;letter-spacing:-0.323px;">Create Release Record</div>
<div class="t" id="t48" style="left:771.28px;top:306px;font-size:11px;color:#111;letter-spacing:0.065px;">Print</div>
<div class="t" id="t49" style="left:771.28px;top:330px;font-size:11px;color:#a3a3a3;letter-spacing:0.052px;">Put On Hold</div>
<div class="t" id="t50" style="left:771.28px;top:354px;font-size:11px;color:#a3a3a3;letter-spacing:-0.398px;">Resume</div>
<div class="t" id="t51" style="left:771.18px;top:378px;font-size:11px;color:#111;letter-spacing:-0.055px;">Search for Knowledge Articles</div>
<div class="t" id="t52" style="left:771.18px;top:402px;font-size:11px;color:#111;letter-spacing:-0.152px;">Set First Response or Comment</div>
<div class="t" id="t53" style="left:749.32px;top:432.5px;font-size:13px;color:#555;letter-spacing:-0.269px;">General</div>
<div class="t" id="t54" style="left:771.28px;top:456px;font-size:11px;color:#111;letter-spacing:-0.268px;">Refresh</div>
</body></html>
